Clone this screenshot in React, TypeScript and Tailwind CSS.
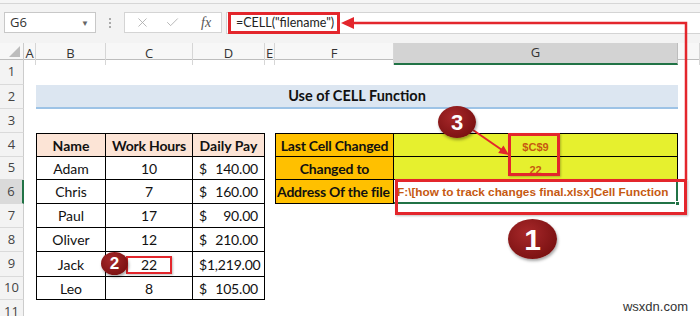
import { X, Check } from "lucide-react";
import type { ReactNode } from "react";

const grid = "grid grid-cols-[24px_12px_70px_87px_72px_10px_119px_284px_1fr]";
const red = "#e3262c";

const people = [
  { name: "Adam", hours: "10", pay: "140.00", h: "h-[23px]" },
  { name: "Chris", hours: "7", pay: "160.00", h: "h-[24px]" },
  { name: "Paul", hours: "17", pay: "90.00", h: "h-[24px]" },
  { name: "Oliver", hours: "12", pay: "210.00", h: "h-[24px]" },
  { name: "Jack", hours: "22", pay: "1,219.00", h: "h-[25px]" },
  { name: "Leo", hours: "8", pay: "105.00", h: "h-[23px]" },
];

function Row({ n, h, active, children }: { n: number; h: string; active?: boolean; children?: ReactNode }) {
  return (
    <div className={`${grid} ${h}`}>
      <div
        className={`flex items-center justify-center border-b border-[#dadada] font-['Open_Sans',sans-serif] text-[13px] text-[#444] ${
          active ? "bg-[#dadada] border-r-2 border-r-[#217346]" : "bg-[#f3f3f3] border-r border-r-[#cccccc]"
        }`}
      >
        {n}
      </div>
      {children}
    </div>
  );
}

const cell = "flex items-center border-r border-b border-solid border-[#000] text-[14px] text-[#111] whitespace-nowrap";
const fCell =
  "col-start-7 flex items-center justify-center bg-[#ffc000] border-l border-r border-b border-solid border-[#000] font-bold text-[14px] tracking-[-0.2px] text-[#111] whitespace-nowrap overflow-hidden";
const gCell =
  "col-start-8 flex items-center justify-center pt-[4px] bg-[#e6f02e] border-r border-b border-solid border-[#000] font-['Liberation_Sans',Arial,sans-serif] font-bold text-[11px] text-[#c65911]";

function Badge({ label, className }: { label: string; className: string }) {
  return (
    <div
      className={`absolute flex items-center justify-center rounded-[50%] bg-[radial-gradient(ellipse_at_40%_35%,#a8282a,#6c0a0a)] font-['Liberation_Sans',Arial,sans-serif] font-bold text-white shadow-[1px_2px_3px_rgba(0,0,0,0.35)] ${className}`}
    >
      {label}
    </div>
  );
}

export default function App() {
  const headers = ["A", "B", "C", "D", "E", "F", "G", ""];
  return (
    <div className="relative w-[700px] h-[316px] overflow-hidden bg-white font-[Lato,sans-serif]">
      {/* ribbon edge */}
      <div className="h-[4px] bg-[#f5f5f5] border-b border-[#d6d6d6]" />

      {/* formula bar */}
      <div className="flex items-start h-[39px] pt-[8px] bg-[#f3f3f3] font-['Open_Sans',sans-serif]">
        <div className="ml-[4px] w-[92px] h-[21px] flex items-center justify-between pl-[5px] pr-[6px] bg-white border border-[#c8c8c8] text-[13px] text-[#333]">
          <span>G6</span>
          <span className="text-[8px] text-[#666]">▼</span>
        </div>
        <div className="w-[28px] h-[21px] flex flex-col items-center justify-center gap-[2px]">
          <span className="w-[2px] h-[2px] bg-[#aaa]" />
          <span className="w-[2px] h-[2px] bg-[#aaa]" />
          <span className="w-[2px] h-[2px] bg-[#aaa]" />
        </div>
        <div className="w-[98px] h-[21px] flex items-center bg-white border border-[#d4d4d4]">
          <X size={15} strokeWidth={1.3} className="ml-[10px] text-[#a8a8a8]" />
          <Check size={15} strokeWidth={1.3} className="ml-[15px] text-[#a8a8a8]" />
          <span className="ml-[21px] font-['Liberation_Serif',serif] italic text-[14px] text-[#555]">fx</span>
        </div>
        <div className="ml-[4px] flex-1 h-[22px] flex items-center bg-white border-y border-l border-[#d4d4d4]">
          <div className="ml-[1px] w-[112px] h-[22px] flex items-center pl-[5px] border-[3px] border-[#e3262c] font-[Lato,sans-serif] text-[12.5px] text-[#222] whitespace-nowrap">
            =CELL("filename")
          </div>
        </div>
      </div>

      {/* column headers */}
      <div className={`${grid} h-[17px] bg-[#f7f7f7] border-b border-[#bdbdbd] font-['Open_Sans',sans-serif] text-[13px] text-[#333]`}>
        <div className="relative border-r border-[#cccccc]">
          <svg width="24" height="16" className="absolute inset-0">
            <polygon points="20,3 20,14 9,14" fill="#bdbdbd" />
          </svg>
        </div>
        {headers.map((c, i) =>
          c === "G" ? (
            <div key={i} className="flex items-center justify-center bg-[#d3d3d3] border-b-2 border-[#217346] border-r border-r-[#bdbdbd]">
              {c}
            </div>
          ) : (
            <div key={i} className="flex items-center justify-center border-r border-[#d6d6d6]">
              {c}
            </div>
          )
        )}
      </div>

      {/* sheet */}
      <Row n={1} h="h-[25px]" />
      <Row n={2} h="h-[24px]">
        <div className="col-start-3 col-span-6 flex items-center justify-center bg-[#dce6f1] border-b-2 border-[#9dc3e6] font-bold text-[14.5px] text-[#111]">
          Use of CELL Function
        </div>
      </Row>
      <Row n={3} h="h-[24px]" />
      <Row n={4} h="h-[24px]">
        <div className={`${cell} col-start-3 justify-center border-l border-t bg-[#fce4d6] font-bold`}>Name</div>
        <div className={`${cell} justify-center border-t bg-[#fce4d6] font-bold tracking-[-0.2px]`}>Work Hours</div>
        <div className={`${cell} justify-center border-t bg-[#fce4d6] font-bold`}>Daily Pay</div>
        <div className={`${fCell} border-t`}>Last Cell Changed</div>
        <div className={`${gCell} border-t`}>$C$9</div>
      </Row>
      {people.map((p, i) => (
        <Row key={p.name} n={i + 5} h={p.h} active={i === 1}>
          <div className={`${cell} col-start-3 justify-center border-l`}>{p.name}</div>
          <div className={`${cell} justify-center`}>{p.hours}</div>
          <div className={`${cell} justify-between pl-[6px] pr-[6px] text-[12.5px] tracking-[-0.2px]`}>
            <span>$</span>
            <span>{p.pay}</span>
          </div>
          {i === 0 && (
            <>
              <div className={fCell}>Changed to</div>
              <div className={gCell}>22</div>
            </>
          )}
          {i === 1 && (
            <>
              <div className={`${fCell} justify-start pl-[1px]`}>Address Of the file</div>
              <div className="col-start-8 relative flex items-center pl-[3px] pt-[3px] bg-white border-r-2 border-b-2 border-[#217346] font-['Liberation_Sans',Arial,sans-serif] font-bold text-[11.8px] text-[#c65911] whitespace-nowrap">
                F:\[how to track changes final.xlsx]Cell Function
                <span className="absolute right-[-4px] bottom-[-4px] w-[5px] h-[5px] bg-[#217346] border border-white" />
              </div>
            </>
          )}
        </Row>
      ))}
      <Row n={11} h="h-[24px]" />

      {/* annotations */}
      <div className="absolute left-[508px] top-[133px] w-[52px] h-[43px] border-[3px] border-[#e3262c] shadow-[1px_1px_2px_rgba(0,0,0,0.25)]" />
      <div className="absolute left-[395px] top-[179px] w-[292px] h-[36px] border-[3px] border-[#e3262c] shadow-[1px_1px_2px_rgba(0,0,0,0.25)]" />
      <div className="absolute left-[126px] top-[256px] w-[46px] h-[18px] border-2 border-[#e3262c] shadow-[1px_1px_2px_rgba(0,0,0,0.25)]" />

      <svg className="absolute inset-0 pointer-events-none" width="700" height="316">
        <polyline points="686,180 686,23 352,23" stroke={red} strokeWidth="2.5" fill="none" />
        <polygon points="341,23 354,17 354,29" fill={red} />
        <line x1="473" y1="130" x2="502" y2="150" stroke={red} strokeWidth="2" />
        <polygon points="509,155 498.2,153 503.4,145.6" fill={red} />
      </svg>

      <Badge label="3" className="left-[438px] top-[106px] w-[38px] h-[32px] text-[22px]" />
      <Badge label="2" className="left-[101px] top-[252px] w-[27px] h-[23px] text-[17px]" />
      <Badge label="1" className="left-[508px] top-[219px] w-[49px] h-[40px] text-[30px]" />

      <div className="absolute right-[12px] bottom-[1px] font-['Liberation_Sans',Arial,sans-serif] text-[13px] leading-[16px] text-[#333]">
        wsxdn.com
      </div>
    </div>
  );
}
